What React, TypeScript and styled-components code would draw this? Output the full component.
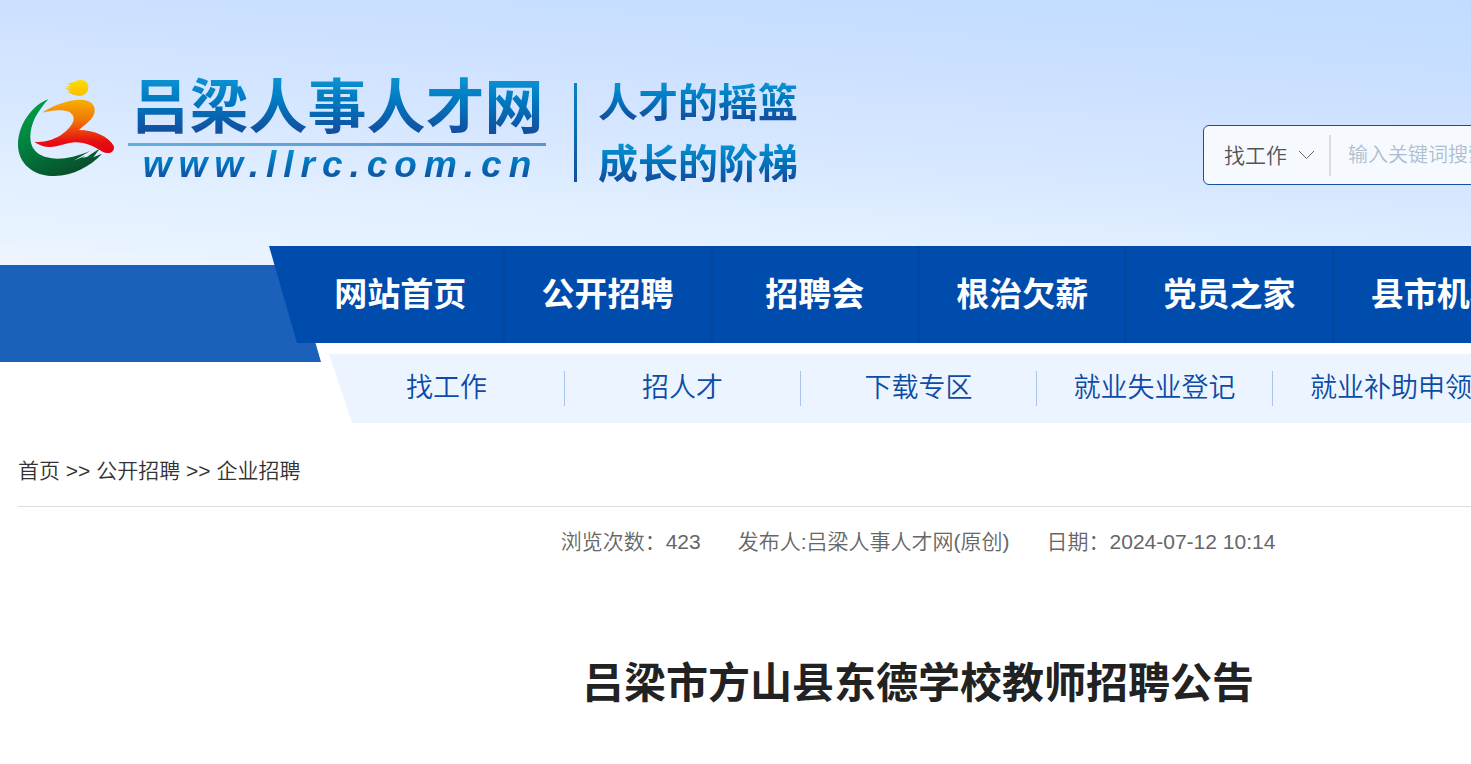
import React from "react";
import styled, { createGlobalStyle } from "styled-components";

const GlobalStyle = createGlobalStyle`
  * { box-sizing: border-box; }
  body {
    margin: 0;
    background: #fff;
    color: #333;
    font-family: "Liberation Sans", "Noto Sans CJK SC", sans-serif;
    font-size: 21px;
    font-weight: 350;
    overflow: hidden auto;
  }
  a { color: inherit; text-decoration: none; }
`;

const Masthead = styled.header`
  min-width: 1836px;
  background: linear-gradient(184deg, #bddaff 0, #c3deff 15%, #cce0ff 33%, #d7e7ff 58%, #e1efff 76%, #e8f3ff 93%, #f0f5ff 100%) 0 0 / 100% 265px no-repeat;
`;

const Wrap = styled.div`
  min-width: 1836px;
  max-width: 1920px;
  margin: 0 auto;
  padding: 0 18px;
`;

const TopBar = styled(Wrap)`
  display: flex;
  justify-content: space-between;
  align-items: flex-start;
  height: 246px;
  padding-top: 79px;
`;

const Logo = styled.a`
  display: flex;
  align-items: flex-start;
`;

const Mark = styled.svg`
  display: block;
  width: 98px;
  height: 98px;
`;

const GradientText = styled.span`
  display: block;
  color: transparent;
  background: linear-gradient(#0a8fd0 10%, #0078c0 40%, #1150a0 85%);
  background-clip: text;
  -webkit-background-clip: text;
  white-space: nowrap;
`;

const Brand = styled.span`
  display: flex;
  flex-direction: column;
  align-items: center;
  width: 418px;
  margin: -4px 0 0 12px;
`;

const BrandName = styled(GradientText)`
  font-size: 59px;
  font-weight: 700;
  line-height: 66px;
`;

const BrandRule = styled.span`
  width: 100%;
  height: 3px;
  margin-top: 2px;
  background: linear-gradient(90deg, #5fb0e0, #6690c8);
`;

const BrandUrl = styled(GradientText)`
  font-size: 37px;
  font-style: italic;
  font-weight: 700;
  line-height: 38px;
  letter-spacing: 7px;
  padding-left: 7px;
`;

const LogoDivider = styled.span`
  width: 3px;
  height: 99px;
  margin: 4px 21px 0 28px;
  background: linear-gradient(#0a80c8, #1150a0);
`;

const Slogan = styled.span`
  display: flex;
  flex-direction: column;
  gap: 17px;
  padding-top: 2px;
`;

const SloganLine = styled(GradientText)`
  font-size: 40px;
  font-weight: 700;
  line-height: 44px;
`;

const SearchBox = styled.form`
  display: flex;
  align-items: center;
  width: 615px;
  height: 60px;
  margin-top: 46px;
  border: 1px solid #1450a4;
  border-radius: 6px;
  background: #f6faff;
`;

const SelectField = styled.label`
  display: flex;
  align-items: center;
  height: 41px;
  width: 127px;
  padding-left: 20px;
  border-right: 2px solid #d9dce0;
`;

const Select = styled.select`
  appearance: none;
  width: 74px;
  padding: 0;
  border: 0;
  background: transparent;
  color: #555;
  font: inherit;
  outline: none;
`;

const Input = styled.input`
  flex: 1;
  min-width: 0;
  height: 100%;
  padding: 0 17px;
  border: 0;
  background: transparent;
  font: inherit;
  font-size: 20px;
  outline: none;
  &::placeholder { color: #afbdd1; opacity: 1; }
`;

const NavStack = styled.div`
  display: grid;
  grid-template-columns: minmax(0, 1fr);
`;

const Ribbon = styled.div`
  grid-area: 1 / 1;
  width: 321px;
  height: 97px;
  margin-top: 19px;
  background: #1b61ba;
  clip-path: polygon(0 0, 293px 0, 100% 100%, 0 100%);
`;

const Navs = styled.div`
  grid-area: 1 / 1;
  margin-left: 269px;
`;

const MainNav = styled.nav`
  height: 97px;
  padding-left: 29px;
  background: #004cac;
  clip-path: polygon(0 0, 100% 0, 100% 100%, 28px 100%);
`;

const MainList = styled.ul`
  display: grid;
  grid-template-columns: repeat(6, 1fr);
  width: 1244px;
  margin: 0;
  padding: 0;
  list-style: none;
`;

const MainItem = styled.li`
  border-right: 3px solid #0047a2;
  color: #fff;
  font-size: 33px;
  font-weight: 700;
  line-height: 97px;
  text-align: center;
  white-space: nowrap;
`;

const SubNav = styled.nav`
  height: 69px;
  margin: 11px 0 0 60px;
  background: #ecf5ff;
  clip-path: polygon(0 0, 100% 0, 100% 100%, 23px 100%);
`;

const SubList = styled.ul`
  display: flex;
  align-items: center;
  height: 100%;
  margin: 0;
  padding: 0;
  list-style: none;
`;

const SubItem = styled.li`
  width: 236px;
  border-right: 1px solid #a9c6ea;
  color: #0c4ba6;
  font-size: 27px;
  line-height: 35px;
  text-align: center;
  white-space: nowrap;
  &:last-child { border-right: 0; }
`;

const Breadcrumb = styled.nav`
  padding: 32px 0 20px;
  border-bottom: 1px solid #ddd;
  line-height: 31px;
`;

const Meta = styled.div`
  display: flex;
  justify-content: center;
  gap: 37px;
  padding-top: 19px;
  color: #666;
  line-height: 31px;
`;

const Title = styled.h1`
  margin: 96px 0 79px;
  color: #222;
  font-size: 42px;
  font-weight: 700;
  line-height: 62px;
  text-align: center;
`;

const mainLinks = ["网站首页", "公开招聘", "招聘会", "根治欠薪", "党员之家", "县市机构"];
const subLinks = ["找工作", "招人才", "下载专区", "就业失业登记", "就业补助申领"];

const LogoMark = () => (
  <Mark viewBox="54 57 294 294" aria-hidden="true">
    <defs>
      <linearGradient id="leaf" x1="0.2" y1="0" x2="0.7" y2="1">
        <stop offset="0" stopColor="#00a045" />
        <stop offset="0.45" stopColor="#008040" />
        <stop offset="1" stopColor="#0a4a28" />
      </linearGradient>
      <linearGradient id="figure" x1="0" y1="0" x2="0" y2="1">
        <stop offset="0" stopColor="#f8b000" />
        <stop offset="0.4" stopColor="#ee7408" />
        <stop offset="0.78" stopColor="#e60f12" />
        <stop offset="1" stopColor="#e60012" />
      </linearGradient>
      <linearGradient id="head" x1="0" y1="0" x2="0" y2="1">
        <stop offset="0" stopColor="#ffdc00" />
        <stop offset="1" stopColor="#fabe00" />
      </linearGradient>
    </defs>
    <path
      fill="url(#leaf)"
      d="M145 118C102 132 54 190 54 254C54 312 103 349 163 348C220 346 270 320 306 281L280 292L298 268C290 270 284 276 262 290L246 294L256 287L221 302L270 273C235 288 202 296 172 296C128 295 92 279 91 232C91 190 112 155 145 118Z"
    />
    <path
      fill="url(#figure)"
      d="M126 158C162 135 207 118 244 119C284 121 291 149 279 169C270 185 252 196 237 210C283 210 326 230 341 257C347 275 326 285 309 276C286 261 257 246 222 247C184 250 151 278 103 245C151 251 203 222 220 184C225 165 212 153 186 151C163 150 144 153 126 158Z"
    />
    <path
      fill="url(#head)"
      d="M203 70L224 66C232 57 258 56 264 74C269 92 256 108 238 108C226 108 218 104 200 94L214 95L194 83L212 86L198 78L213 79Z"
    />
  </Mark>
);

export default function App() {
  return (
    <>
      <GlobalStyle />
      <Masthead>
        <TopBar>
          <Logo href="#">
            <LogoMark />
            <Brand>
              <BrandName>吕梁人事人才网</BrandName>
              <BrandRule />
              <BrandUrl>www.llrc.com.cn</BrandUrl>
            </Brand>
            <LogoDivider />
            <Slogan>
              <SloganLine>人才的摇篮</SloganLine>
              <SloganLine>成长的阶梯</SloganLine>
            </Slogan>
          </Logo>
          <SearchBox role="search">
            <SelectField>
              <Select aria-label="找工作" defaultValue="job">
                <option value="job">找工作</option>
              </Select>
              <svg width="17" height="10" viewBox="0 0 17 10" fill="none" stroke="#666" aria-hidden="true">
                <path d="M1 1L8.500 8.500L16 1" />
              </svg>
            </SelectField>
            <Input type="text" aria-label="输入关键词搜索" placeholder="输入关键词搜索" />
          </SearchBox>
        </TopBar>
        <NavStack>
          <Ribbon />
          <Navs>
            <MainNav>
              <MainList>
                {mainLinks.map((label) => (
                  <MainItem key={label}>
                    <a href="#">{label}</a>
                  </MainItem>
                ))}
              </MainList>
            </MainNav>
            <SubNav>
              <SubList>
                {subLinks.map((label) => (
                  <SubItem key={label}>
                    <a href="#">{label}</a>
                  </SubItem>
                ))}
              </SubList>
            </SubNav>
          </Navs>
        </NavStack>
      </Masthead>
      <Wrap as="main">
        <Breadcrumb>
          <a href="#">首页</a> &gt;&gt; <a href="#">公开招聘</a> &gt;&gt; <a href="#">企业招聘</a>
        </Breadcrumb>
        <Meta>
          <span>浏览次数：423</span>
          <span>发布人:吕梁人事人才网(原创)</span>
          <span>日期：2024-07-12 10:14</span>
        </Meta>
        <Title>吕梁市方山县东德学校教师招聘公告</Title>
      </Wrap>
    </>
  );
}
